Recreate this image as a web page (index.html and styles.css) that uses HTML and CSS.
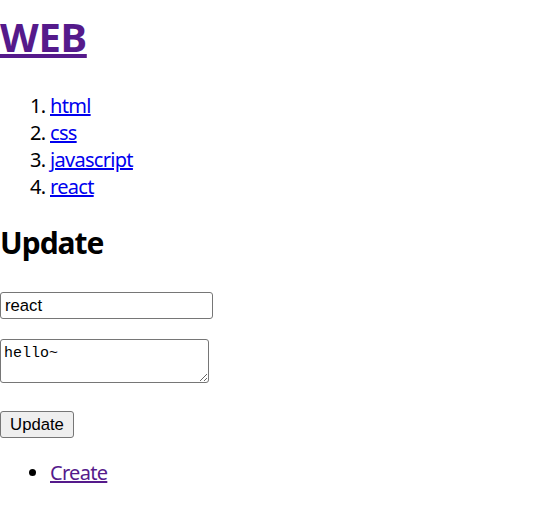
FILE: index.html
```html
<!DOCTYPE html>
<html>
<head>
<meta charset="utf-8">
<link rel="stylesheet" href="styles.css">
</head>
<body>
<h1 class="title"><a href="#" class="visited">WEB</a></h1>
<ol class="nav">
  <li><a href="#" class="link">html</a></li>
  <li><a href="#" class="link">css</a></li>
  <li><a href="#" class="link">javascript</a></li>
  <li><a href="#" class="link">react</a></li>
</ol>
<h2 class="heading">Update</h2>
<form class="form">
  <input class="field" type="text" value="react">
  <textarea class="area">hello~</textarea>
  <button class="btn" type="button">Update</button>
</form>
<ul class="actions">
  <li><a href="#" class="visited">Create</a></li>
</ul>
</body>
</html>
```
FILE: styles.css
```css
body {
  margin: 0;
  font-family: "Noto Sans", "Open Sans", sans-serif;
  font-size: 20px;
  color: #000;
  background: #fff;
}
.visited { color: #551a8b; }
.link { color: #0000ee; }
.title {
  font-size: 40px;
  line-height: 53px;
  margin: 10px 0 0;
  letter-spacing: -0.3px;
}
.nav {
  margin: 29px 0 0;
  padding-left: 50px;
  line-height: 27px;
  letter-spacing: -0.7px;
}
.heading {
  font-size: 30px;
  line-height: 40px;
  margin: 23px 0 0;
  letter-spacing: -1px;
}
.form {
  margin: 29px 0 0;
  display: flex;
  flex-direction: column;
  align-items: flex-start;
}
.field {
  box-sizing: border-box;
  width: 213px;
  height: 27px;
  margin: 0;
  padding: 1px 4px;
  font-family: "Liberation Sans", Arial, sans-serif;
  font-size: 16.7px;
  border: 1px solid #767676;
  border-radius: 3px;
}
.area {
  box-sizing: border-box;
  width: 209px;
  height: 44px;
  margin: 20px 0 0;
  padding: 5px 3px 3px;
  font-family: "Liberation Mono", monospace;
  font-size: 15px;
  line-height: 18px;
  border: 1px solid #767676;
  border-radius: 3px;
}
.btn {
  box-sizing: border-box;
  width: 74px;
  height: 27px;
  margin: 28px 0 0;
  padding: 0;
  font-family: "Liberation Sans", Arial, sans-serif;
  font-size: 16.7px;
  background: #efefef;
  border: 1px solid #767676;
  border-radius: 3px;
  color: #000;
}
.actions {
  margin: 21px 0 0;
  padding-left: 50px;
  line-height: 27px;
  letter-spacing: -0.7px;
}
```
